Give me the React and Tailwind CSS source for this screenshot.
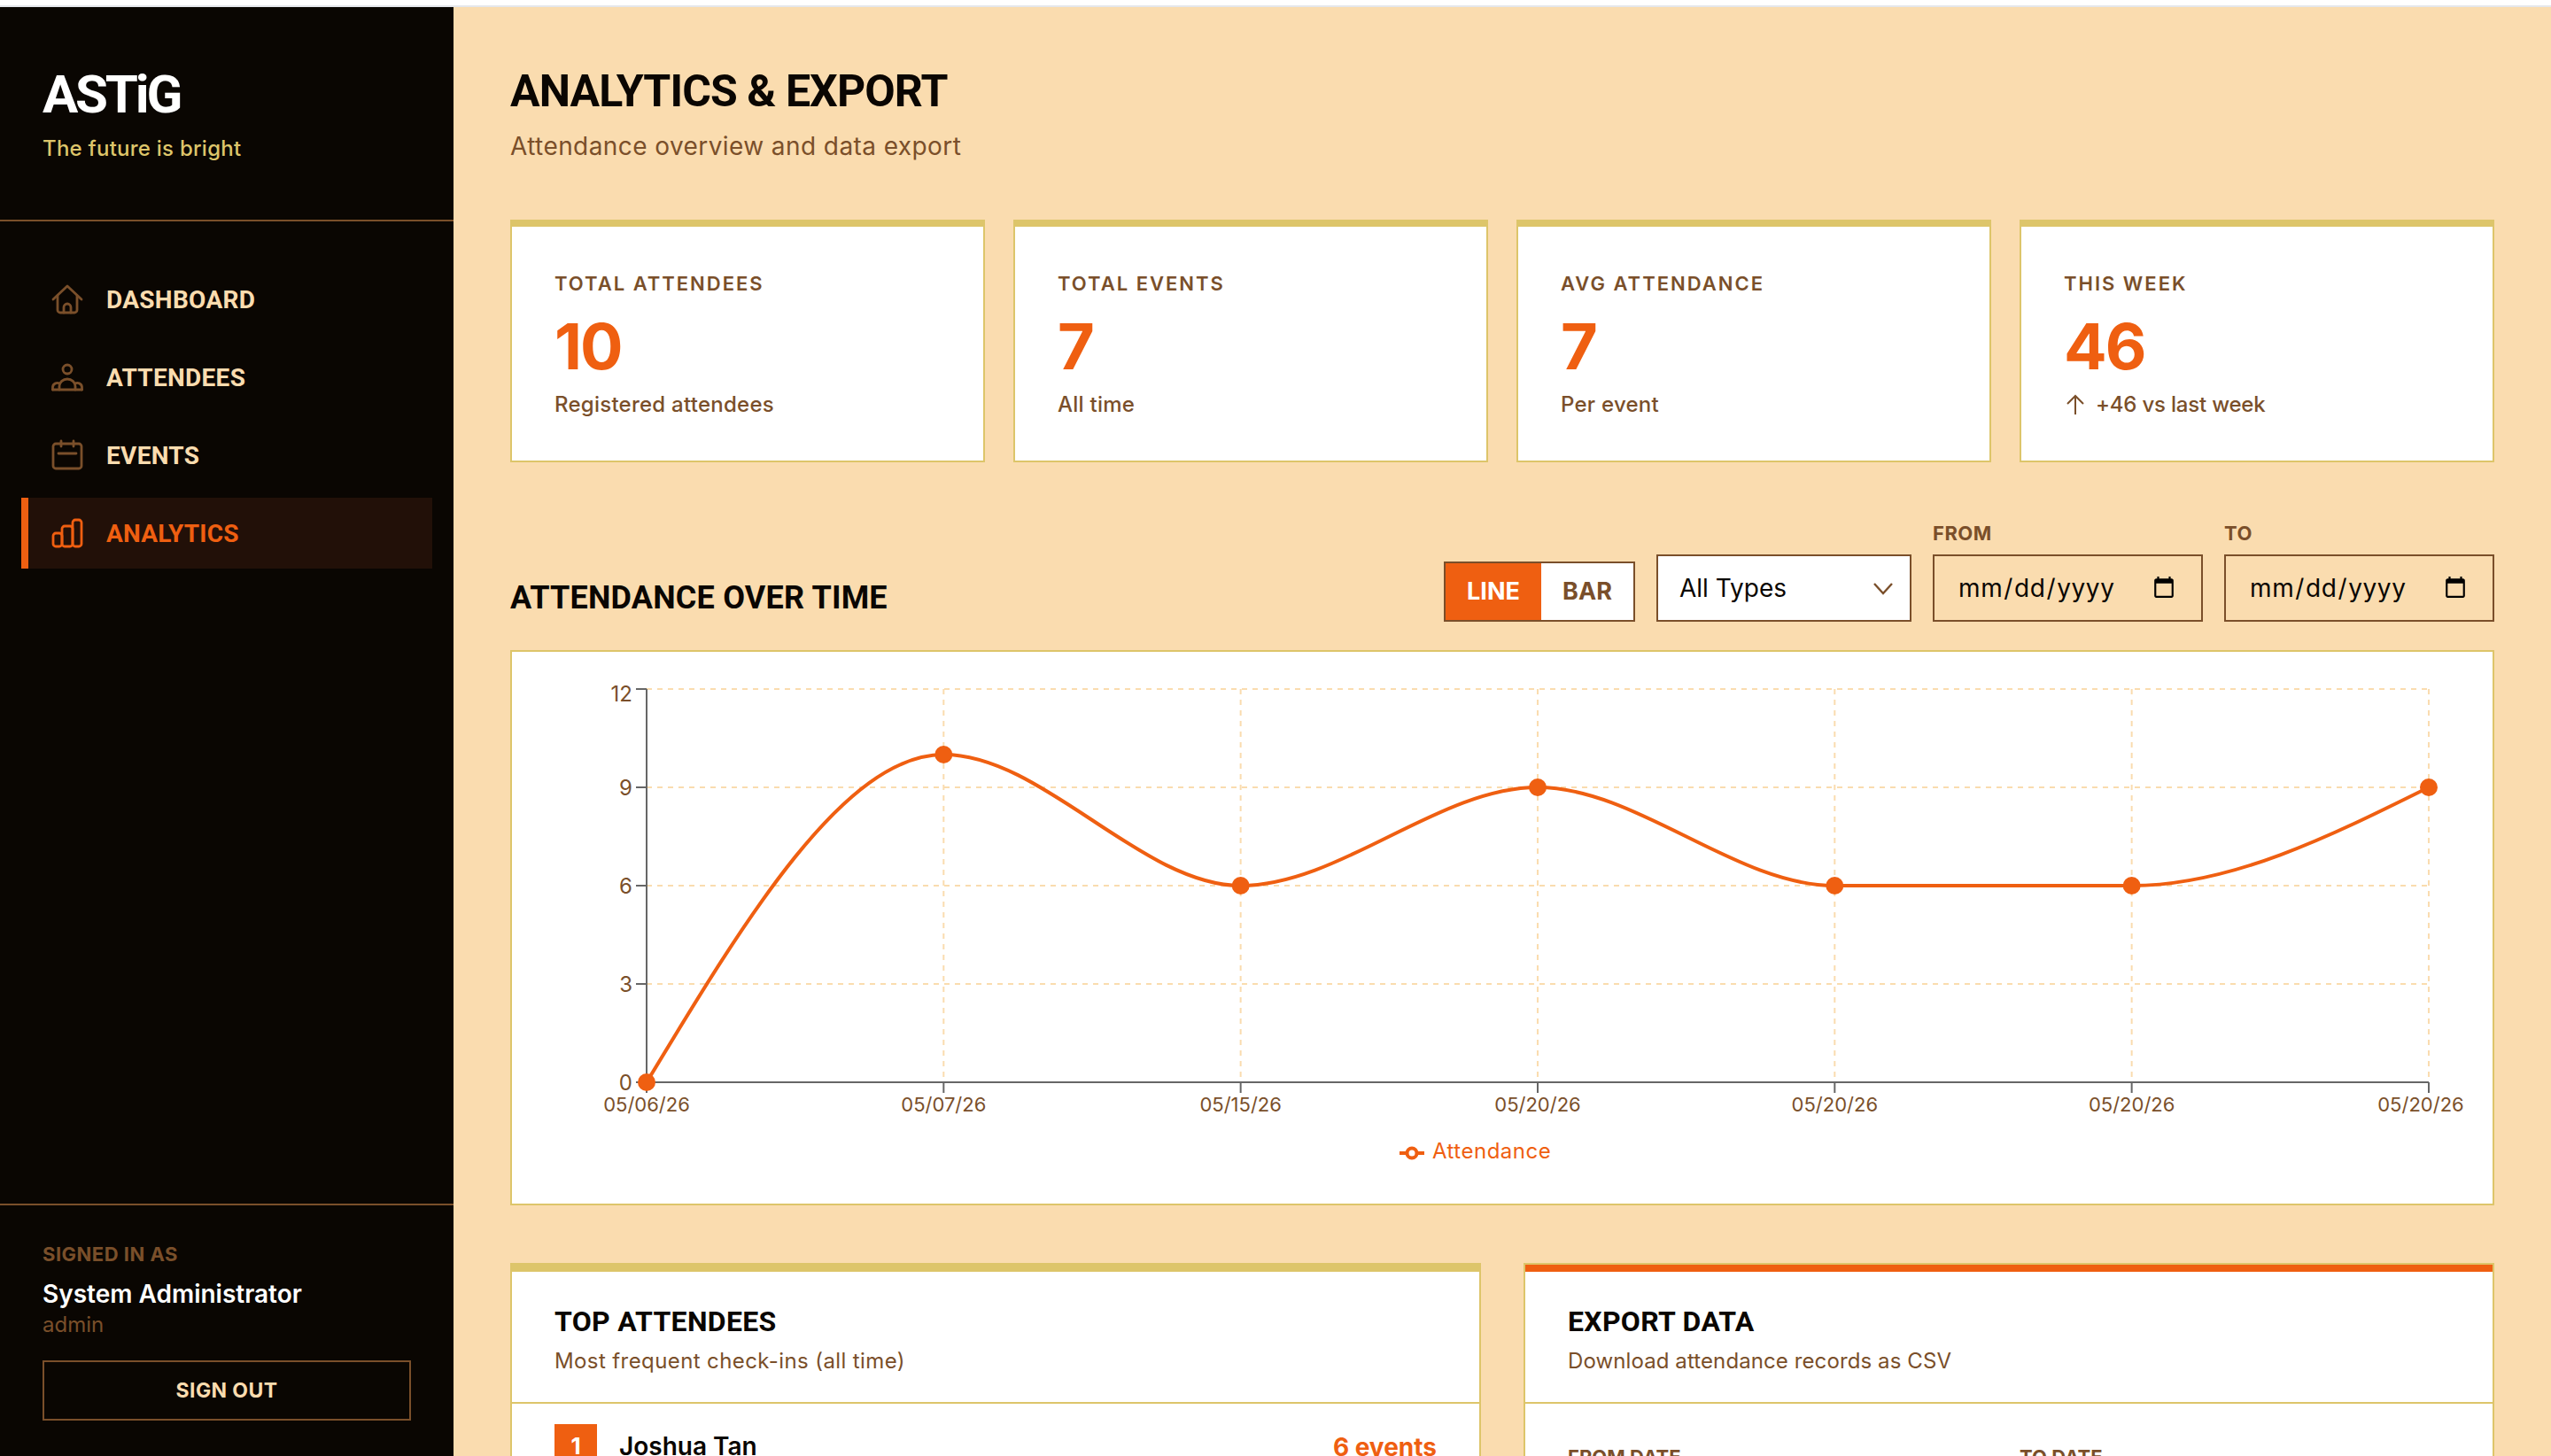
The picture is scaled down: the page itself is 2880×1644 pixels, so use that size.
import React from "react";

const FONT = "font-['Inter','Noto_Sans',sans-serif]";
const HEAD = "font-['Roboto','Inter',sans-serif]";

function monotonePath(pts) {
  const n = pts.length;
  const sl = [];
  for (let i = 0; i < n - 1; i++) sl.push((pts[i + 1][1] - pts[i][1]) / (pts[i + 1][0] - pts[i][0]));
  const sign = (v) => (v < 0 ? -1 : 1);
  const t = new Array(n).fill(0);
  for (let i = 1; i < n - 1; i++) {
    const h0 = pts[i][0] - pts[i - 1][0];
    const h1 = pts[i + 1][0] - pts[i][0];
    const p = (sl[i - 1] * h1 + sl[i] * h0) / (h0 + h1);
    t[i] = (sign(sl[i - 1]) + sign(sl[i])) * Math.min(Math.abs(sl[i - 1]), Math.abs(sl[i]), 0.5 * Math.abs(p)) || 0;
  }
  t[0] = (3 * sl[0] - t[1]) / 2;
  t[n - 1] = (3 * sl[n - 2] - t[n - 2]) / 2;
  let d = `M${pts[0][0]},${pts[0][1]}`;
  for (let i = 0; i < n - 1; i++) {
    const h = (pts[i + 1][0] - pts[i][0]) / 3;
    d += `C${pts[i][0] + h},${pts[i][1] + h * t[i]},${pts[i + 1][0] - h},${pts[i + 1][1] - h * t[i + 1]},${pts[i + 1][0]},${pts[i + 1][1]}`;
  }
  return d;
}

const HouseIcon = () => (
  <svg viewBox="0 0 36 36" fill="none" stroke="currentColor" strokeWidth="2.8" strokeLinejoin="round" strokeLinecap="round" className="w-9 h-9 shrink-0">
    <path d="M2 18 L18 3 L34 18" />
    <path d="M7 14 V30 a3 3 0 0 0 3 3 H26 a3 3 0 0 0 3-3 V14" />
    <path d="M14 33 V27 a4 4 0 0 1 8 0 V33" />
  </svg>
);
const PeopleIcon = () => (
  <svg viewBox="0 0 36 36" fill="none" stroke="currentColor" strokeWidth="2.8" strokeLinejoin="round" strokeLinecap="round" className="w-9 h-9 shrink-0">
    <circle cx="18" cy="9" r="5" />
    <path d="M1.5 32 H34.5" />
    <path d="M9 32 V28 a9 8 0 0 1 18 0 V32" />
    <path d="M1.5 32 V29 a5 5 0 0 1 8-3.5" />
    <path d="M34.5 32 V29 a5 5 0 0 0-8-3.5" />
  </svg>
);
const CalendarIcon = () => (
  <svg viewBox="0 0 36 36" fill="none" stroke="currentColor" strokeWidth="2.8" strokeLinejoin="round" strokeLinecap="round" className="w-9 h-9 shrink-0">
    <rect x="2" y="5" width="32" height="28" rx="3" />
    <path d="M11 2 V8 M25 2 V8 M8 16 H28" />
  </svg>
);
const BarsIcon = () => (
  <svg viewBox="0 0 36 36" fill="none" stroke="currentColor" strokeWidth="2.8" strokeLinejoin="round" className="w-9 h-9 shrink-0">
    <rect x="2" y="18" width="10" height="15" rx="3" />
    <rect x="12" y="10" width="12" height="23" rx="3" />
    <rect x="24" y="3" width="10" height="30" rx="3" />
  </svg>
);

const NAV = [
  { label: "DASHBOARD", Icon: HouseIcon },
  { label: "ATTENDEES", Icon: PeopleIcon },
  { label: "EVENTS", Icon: CalendarIcon },
  { label: "ANALYTICS", Icon: BarsIcon, active: true },
];

function Sidebar() {
  return (
    <aside className="w-[512px] shrink-0 h-full bg-[#0a0602] flex flex-col">
      <div className="h-[242px] border-b-2 border-[#7a4f2a] pl-12 pt-[63px] shrink-0">
        <div className={HEAD + " text-[60px] leading-[72px] font-bold text-white tracking-[-3.2px]"}>ASTiG</div>
        <div className="text-[24px] leading-[32px] mt-[9px] font-medium text-[#ddc56a] tracking-[0.25px]">The future is bright</div>
      </div>
      <nav className="flex-1 px-6 pt-[48px] flex flex-col gap-2">
        {NAV.map(({ label, Icon, active }) => (
          <div
            key={label}
            className={
              active
                ? "h-[80px] flex items-center gap-[26px] border-l-8 border-[#ef5f11] bg-[#221008] pl-[26px] text-[#ef5f11]"
                : "h-[80px] flex items-center gap-[26px] border-l-8 border-transparent pl-[26px] text-[#7a4f2a]"
            }
          >
            <Icon />
            <span className={active ? HEAD + " pt-[2px] text-[28px] font-bold tracking-[0.2px]" : HEAD + " pt-[2px] text-[28px] font-bold tracking-[0.3px] text-[#fadcaf]"}>{label}</span>
          </div>
        ))}
      </nav>
      <div className="h-[285px] shrink-0 border-t-2 border-[#7a4f2a] px-12 pt-[40px]">
        <div className="text-[22px] leading-[30px] font-bold text-[#7a4f2a] tracking-[0.5px]">SIGNED IN AS</div>
        <div className="text-[28px] leading-[36px] mt-[12px] font-semibold text-white">System Administrator</div>
        <div className="text-[24px] leading-[30px] mt-[2px] text-[#7a4f2a]">admin</div>
        <button className="mt-[25px] w-[416px] h-[68px] border-2 border-[#7a4f2a] text-[#fadcaf] text-[23px] font-bold tracking-[0.4px]">SIGN OUT</button>
      </div>
    </aside>
  );
}

const STATS = [
  { label: "TOTAL ATTENDEES", value: "10", sub: "Registered attendees" },
  { label: "TOTAL EVENTS", value: "7", sub: "All time" },
  { label: "AVG ATTENDANCE", value: "7", sub: "Per event" },
  { label: "THIS WEEK", value: "46", sub: "+46 vs last week", arrow: true },
];

function StatCard({ label, value, sub, arrow }) {
  return (
    <div className="h-[274px] bg-white border-2 border-t-8 border-[#ddc56a] pl-12 pt-[48px]">
      <div className="text-[22px] leading-[32px] font-semibold tracking-[2px] text-[#7a4f2a]">{label}</div>
      <div className="text-[72px] leading-[80px] mt-[15px] font-bold text-[#ef5f11] tracking-[-2px]">{value}</div>
      <div className={(arrow ? "tracking-[-0.2px] " : "tracking-[0.25px] ") + "text-[24px] leading-[32px] mt-[10px] font-medium text-[#7a4f2a] flex items-center gap-[13px]"}>
        {arrow && (
          <svg viewBox="0 0 20 24" fill="none" stroke="currentColor" strokeWidth="2" className="ml-[3px] w-[20px] h-[24px] shrink-0">
            <path d="M10 23 V2 M1 11 L10 2 L19 11" />
          </svg>
        )}
        <span>{sub}</span>
      </div>
    </div>
  );
}

function DateField({ label }) {
  return (
    <div className="w-[305px]">
      <div className="text-[22px] leading-[24px] font-bold text-[#7a4f2a] mb-3 tracking-[0.5px]">{label}</div>
      <input
        type="date"
        className="w-full h-[76px] border-2 border-[#7a4f2a] bg-transparent pl-[26px] pr-[26px] text-[28px] tracking-[0.6px] text-[#0a0602] outline-none"
      />
    </div>
  );
}

function Controls() {
  return (
    <div className="flex items-end gap-6">
      <div className="flex h-[68px] border-2 border-[#7a4f2a] bg-white text-[27px] font-bold">
        <div className="w-[108px] bg-[#ef5f11] text-white flex items-center justify-center">LINE</div>
        <div className="w-[104px] text-[#7a4f2a] flex items-center justify-center">BAR</div>
      </div>
      <div className="relative w-[288px] h-[76px]">
        <select className="w-full h-full appearance-none border-2 border-[#7a4f2a] bg-white pl-[24px] text-[28px] text-[#0a0602] outline-none rounded-none">
          <option>All Types</option>
        </select>
        <svg viewBox="0 0 22 14" fill="none" stroke="#7a4f2a" strokeWidth="2.4" className="absolute right-[21px] top-[32px] w-[22px] h-[14px] pointer-events-none">
          <path d="M1 1 L11 12 L21 1" />
        </svg>
      </div>
      <DateField label="FROM" />
      <DateField label="TO" />
    </div>
  );
}

function Chart() {
  // svg coordinates = page coordinates minus the card's inner origin (578, 736)
  const ox = 152, y0 = 486, step = 335.33, unit = 37;
  const vals = [0, 10, 6, 9, 6, 6, 9];
  const dates = ["05/06/26", "05/07/26", "05/15/26", "05/20/26", "05/20/26", "05/20/26", "05/20/26"];
  const pts = vals.map((v, i) => [ox + step * i, y0 - v * unit]);
  const xs = pts.map((p) => p[0]);
  const right = xs[6];
  return (
    <div className="h-[627px] bg-white border-2 border-[#ddc56a]">
      <svg viewBox="0 0 2236 623" className="block w-full h-full" fontSize="24" fill="#7a4f2a">
        <g stroke="#fadcaf" strokeWidth="2" strokeDasharray="6 6" fill="none">
          {[3, 6, 9, 12].map((v) => (
            <line key={v} x1={ox} x2={right} y1={y0 - v * unit} y2={y0 - v * unit} />
          ))}
          {xs.slice(1).map((x, i) => (
            <line key={i} x1={x} x2={x} y1={y0 - 12 * unit} y2={y0} />
          ))}
        </g>
        <g stroke="#666666" strokeWidth="2">
          <line x1={ox} x2={ox} y1={y0 - 12 * unit} y2={y0} />
          <line x1={ox} x2={right} y1={y0} y2={y0} />
          {[0, 3, 6, 9, 12].map((v) => (
            <line key={v} x1={ox - 12} x2={ox} y1={y0 - v * unit} y2={y0 - v * unit} />
          ))}
          {xs.map((x, i) => (
            <line key={i} x1={x} x2={x} y1={y0} y2={y0 + 12} />
          ))}
        </g>
        {[0, 3, 6, 9, 12].map((v) => (
          <text key={v} x={ox - 16} y={y0 - v * unit + (v === 12 ? 14 : 9)} textAnchor="end">{v}</text>
        ))}
        {dates.map((d, i) => (
          <text key={i} x={i === 6 ? xs[i] - 9 : xs[i]} y={y0 + 33} textAnchor="middle" fontSize="22">{d}</text>
        ))}
        <path d={monotonePath(pts)} fill="none" stroke="#ef5f11" strokeWidth="4" />
        {pts.map((p, i) => (
          <circle key={i} cx={p[0]} cy={p[1]} r="10" fill="#ef5f11" />
        ))}
        <g stroke="#ef5f11" strokeWidth="4" fill="#ffffff">
          <line x1="1002" x2="1030" y1="566" y2="566" />
          <circle cx="1016" cy="566" r="5.5" />
        </g>
        <text x="1039" y="572" fill="#ef5f11" letterSpacing="0.5">Attendance</text>
      </svg>
    </div>
  );
}

function PanelHead({ title, sub, bar, subTrack }) {
  return (
    <>
      <div className={bar + " h-2"} />
      <div className="h-[149px] border-b-2 border-[#ddc56a] pl-12 pt-[36px]">
        <div className={HEAD + " text-[32px] leading-[40px] font-bold text-[#0a0602] tracking-[0.3px]"}>{title}</div>
        <div className={subTrack + " text-[24px] leading-[32px] mt-[9px] text-[#7a4f2a]"}>{sub}</div>
      </div>
    </>
  );
}

export default function App() {
  return (
    <div className={FONT + " w-[2880px] h-[1644px] overflow-hidden flex flex-col bg-white"}>
      <div className="h-[6px] bg-white shrink-0" />
      <div className="h-[2px] bg-[#e5e7eb] shrink-0" />
      <div className="flex-1 min-h-0 flex">
        <Sidebar />
        <main className="flex-1 min-w-0 h-full overflow-hidden bg-[#fadcaf] px-16 pt-[64px]">
          <h1 className={HEAD + " text-[50px] leading-[62px] font-bold text-[#0a0602] tracking-[-0.9px]"}>ANALYTICS &amp; EXPORT</h1>
          <p className="text-[28px] leading-[36px] mt-[13px] text-[#7a4f2a] tracking-[0.42px]">Attendance overview and data export</p>
          <div className="grid grid-cols-4 gap-8 mt-[65px]">
            {STATS.map((s) => (
              <StatCard key={s.label} {...s} />
            ))}
          </div>
          <div className="flex items-end justify-between mt-[68px] mb-8">
            <h2 className={HEAD + " text-[36px] leading-[44px] mb-[5px] font-bold text-[#0a0602] tracking-[0.2px]"}>ATTENDANCE OVER TIME</h2>
            <Controls />
          </div>
          <Chart />
          <div className="grid grid-cols-2 gap-12 mt-[65px]">
            <section className="bg-white border-2 border-[#ddc56a]">
              <PanelHead title="TOP ATTENDEES" sub="Most frequent check-ins (all time)" bar="bg-[#ddc56a]" subTrack="tracking-[0.4px]" />
              <div className="px-12 pt-[23px] flex items-start justify-between">
                <div className="flex items-center gap-[25px]">
                  <div className="w-12 h-12 bg-[#ef5f11] text-white text-[26px] font-bold flex items-center justify-center">1</div>
                  <div className="text-[28px] font-semibold text-[#0a0602] pt-[2px]">Joshua Tan</div>
                </div>
                <div className="text-[28px] leading-[48px] font-bold text-[#ef5f11] pt-[2px]">6 events</div>
              </div>
            </section>
            <section className="bg-white border-2 border-[#ddc56a]">
              <PanelHead title="EXPORT DATA" sub="Download attendance records as CSV" bar="bg-[#ef5f11]" subTrack="tracking-[0.1px]" />
              <div className="px-12 pt-[44px] grid grid-cols-2 gap-6">
                <div className="text-[22px] font-bold text-[#7a4f2a]">FROM DATE</div>
                <div className="text-[22px] font-bold text-[#7a4f2a]">TO DATE</div>
              </div>
            </section>
          </div>
        </main>
      </div>
    </div>
  );
}
